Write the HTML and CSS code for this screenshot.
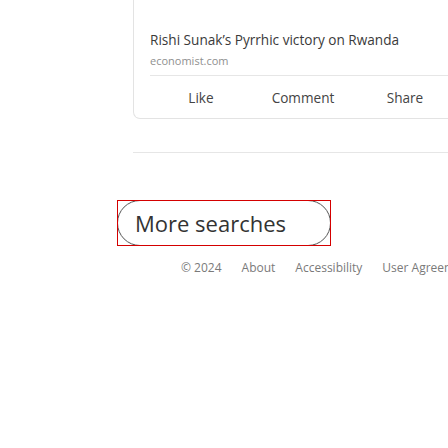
FILE: index.html
```html
<!DOCTYPE html>
<html>
<head>
<meta charset="utf-8">
<link rel="stylesheet" href="styles.css">
</head>
<body>
<div class="page">
  <div class="card">
    <div class="link">
      <div class="title">Rishi Sunak’s Pyrrhic victory on Rwanda</div>
      <div class="domain">economist.com</div>
    </div>
    <div class="actions">
      <span class="act">Like</span>
      <span class="act">Comment</span>
      <span class="act">Share</span>
    </div>
  </div>
  <div class="rule"></div>
  <div class="more-wrap">
    <button class="more">More searches</button>
  </div>
  <div class="footer">
    <span>© 2024</span>
    <span>About</span>
    <span>Accessibility</span>
    <span>User Agreement</span>
  </div>
</div>
</body>
</html>
```
FILE: styles.css
```css
html, body {
  margin: 0;
  padding: 0;
  background: #fff;
}
body {
  font-family: "Open Sans", "Noto Sans", sans-serif;
  color: #333;
  width: 448px;
  height: 448px;
  overflow: hidden;
}
.page {
  width: 600px;
  padding-left: 133px;
}
.card {
  width: 340px;
  border: 1px solid #e3e3e3;
  border-top: 0;
  border-radius: 0 0 7px 7px;
  padding: 31px 16px 0 16px;
  box-sizing: border-box;
  height: 119px;
}
.title {
  font-size: 13.6px;
  line-height: 18px;
  color: #3a3a3a;
}
.domain {
  margin-top: 5px;
  font-size: 11px;
  line-height: 14px;
  color: #8f8f8f;
  padding-bottom: 7px;
  border-bottom: 1px solid #e6e6e6;
}
.actions {
  display: grid;
  grid-template-columns: repeat(3, 102px);
  padding-top: 13px;
}
.act {
  text-align: center;
  font-size: 13.6px;
  line-height: 18px;
  color: #444;
}
.rule {
  margin-top: 33px;
  height: 1px;
  background: #e6e6e6;
  width: 400px;
}
.more-wrap {
  margin-top: 47px;
  margin-left: -16px;
  position: relative;
  width: 214px;
  height: 46px;
}
.more {
  display: block;
  width: 214px;
  height: 46px;
  border: 1px solid #555;
  border-radius: 23px;
  background: #fff;
  font-family: "Open Sans", sans-serif;
  font-size: 22px;
  color: #333;
  text-align: left;
  padding: 0 0 0 17px;
  margin: 0;
}
.more-wrap::after {
  content: "";
  position: absolute;
  left: 0;
  top: 0;
  right: 0;
  bottom: 0;
  border: 1.5px solid #d40000;
  pointer-events: none;
}
.footer {
  margin-top: 14px;
  margin-left: 48px;
  display: flex;
  gap: 20px;
  white-space: nowrap;
  font-size: 12px;
  line-height: 16px;
  color: #7a7a7a;
}
```
